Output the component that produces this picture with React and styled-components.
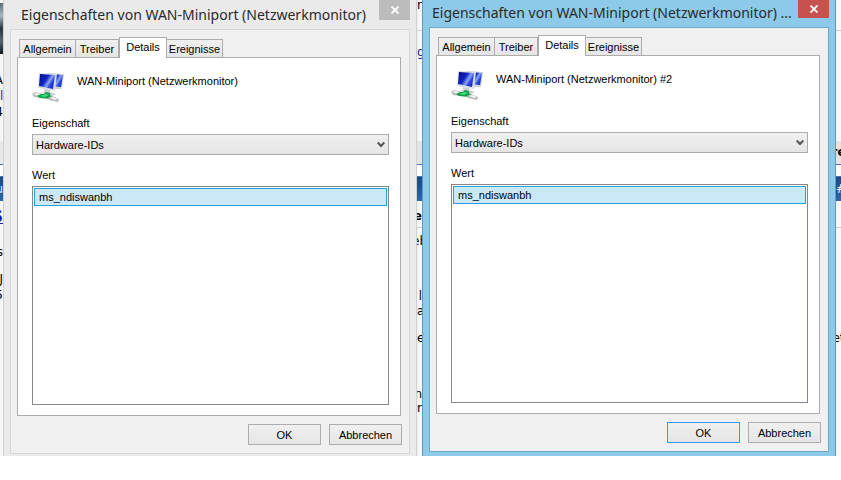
import React, { useState } from 'react'
import styled, { createGlobalStyle } from 'styled-components';

const GlobalStyle = createGlobalStyle`
  * {
    box-sizing: border-box;
  }

  body {
    margin: 0;
    background: #ffffff;
    color: #000000;
    font-family: "Liberation Sans", Arial, sans-serif;
    font-size: 12px;
  }
`;

const Desktop = styled.main`
  display: flex;
  overflow: hidden;
`;

/* page that shows between the windows */
const Strip = styled.div`
  flex: 0 0 ${(props) => props.$width}px;
  width: ${(props) => props.$width}px;
  overflow: hidden;
  background: linear-gradient(to right, #f2f2f2, #fbfbfb);
`;

const Slice = styled.div`
  display: flex;
  justify-content: ${(props) => props.$align || 'flex-start'};
  height: ${(props) => props.$height}px;
  line-height: ${(props) => props.$height}px;
  overflow: hidden;
  white-space: nowrap;
  background: ${(props) => props.$bg || 'transparent'};
  color: ${(props) => props.$color || '#000000'};
  font-family: "DejaVu Sans", sans-serif;
  font-size: ${(props) => (props.$big ? 16 : 12)}px;
  font-weight: ${(props) => (props.$bold ? 'bold' : 'normal')};
  text-decoration: ${(props) => (props.$underline ? 'underline' : 'none')};
`;

const Window = styled.section`
  flex: 1 1 0;
  min-width: 0;
  padding: 0 6px 2px;
  border: solid ${(props) => (props.$active ? '#6099b9' : '#cfcfcf')};
  border-width: 0 1px;
  background: ${(props) => (props.$active ? '#8dc9e8' : '#eaeaea')};
`;

const TitleBar = styled.header`
  display: flex;
  justify-content: space-between;
  align-items: flex-start;
  height: ${(props) => (props.$active ? 27 : 29)}px;
  padding-left: ${(props) => (props.$active ? 3 : 11)}px;
`;

const Title = styled.h1`
  margin: 0;
  overflow: hidden;
  white-space: nowrap;
  color: #2b2b2b;
  font-family: "Noto Sans", "Open Sans", sans-serif;
  font-size: 14px;
  font-weight: normal;
  line-height: ${(props) => (props.$active ? 26 : 30)}px;
`;

const CloseButton = styled.button`
  display: flex;
  flex: 0 0 31px;
  align-items: center;
  justify-content: center;
  height: ${(props) => (props.$active ? 18 : 20)}px;
  padding: 0;
  border: none;
  background: ${(props) => (props.$active ? '#c75050' : '#bcbcbc')};
`;

const Client = styled.div`
  padding: 7px 7px 8px 6px;
  border: 1px solid ${(props) => (props.$active ? '#70aac8' : '#d9d9d9')};
  background: #f0f0f0;
`;

const TabList = styled.div`
  display: flex;
  align-items: flex-end;
  padding-left: 2px;
`;

const Tab = styled.button`
  position: relative;
  height: ${(props) => (props.$selected ? 21 : 18)}px;
  width: ${(props) => props.$width}px;
  margin-bottom: ${(props) => (props.$selected ? -1 : 0)}px;
  padding: 0 0 ${(props) => (props.$selected ? 2 : 0)}px;
  border: 1px solid #acacac;
  border-bottom: none;
  border-left-width: ${(props) => (props.$joined ? 0 : 1)}px;
  background: ${(props) => (props.$selected ? '#ffffff' : 'linear-gradient(#f0f0f0, #e5e5e5)')};
  color: #000000;
  font-family: inherit;
  font-size: 11px;
  line-height: 16px;
  white-space: nowrap;
`;

const Panel = styled.div`
  margin-right: 1px;
  padding: 13px 11px 10px 14px;
  border: 1px solid #acacac;
  background: #ffffff;
`;

const DeviceRow = styled.div`
  display: flex;
  gap: 13px;
  height: 32px;
  margin-bottom: 12px;
`;

const DeviceName = styled.span`
  font-size: 11px;
  line-height: 20px;
`;

const Label = styled.label`
  display: block;
  margin-bottom: 3px;
  font-size: 11px;
  line-height: 16px;
`;

const SelectBox = styled.div`
  position: relative;
  margin-bottom: 12px;

  svg {
    position: absolute;
    top: 7px;
    right: 4px;
    pointer-events: none;
  }
`;

const Select = styled.select`
  display: block;
  width: 100%;
  height: 21px;
  padding: 0 3px;
  appearance: none;
  border: 1px solid #acacac;
  border-radius: 0;
  background: linear-gradient(#f0f0f0, #e5e5e5);
  color: #000000;
  font-family: inherit;
  font-size: 11px;
`;

const ValueList = styled.ul`
  height: 219px;
  margin: 0;
  padding: 1px;
  border: 1px solid #828790;
  list-style: none;
`;

const ValueItem = styled.li`
  height: 18px;
  padding: 0 4px;
  border: 1px solid #26a0da;
  background: #cbe8f6;
  font-size: 11px;
  line-height: 17px;
`;

const ButtonRow = styled.div`
  display: flex;
  justify-content: flex-end;
  gap: 8px;
  margin-top: 8px;
`;

const DialogButton = styled.button`
  width: 73px;
  height: 21px;
  padding: 0;
  border: 1px solid ${(props) => (props.$primary ? '#3399ff' : '#acacac')};
  background: linear-gradient(#f0f0f0, #e5e5e5);
  color: #000000;
  font-family: inherit;
  font-size: 11px;
`;

const NetworkIcon = ({ id }) => (
  <svg width="32" height="32" viewBox="0 0 32 32" aria-hidden="true">
    <defs>
      <linearGradient id={`${id}-screen`} x1="0" y1="0.2" x2="1" y2="0.8">
        <stop offset="0" stopColor="#050f8c" />
        <stop offset="0.4" stopColor="#1226c8" />
        <stop offset="0.6" stopColor="#8ea6f4" />
        <stop offset="0.75" stopColor="#2a48dc" />
        <stop offset="1" stopColor="#0f22b4" />
      </linearGradient>
    </defs>
    <path d="M16 2 L32 3 L30 18 L17 18 Z" fill="#cdd3da" />
    <path d="M18 3 L31 4 L29 16 L18 15 Z" fill={`url(#${id}-screen)`} />
    <path d="M12 18 L18 19 L18 21 L24 23 L20 25 L9 22 L12 21 Z" fill="#c9ced3" />
    <path d="M7 2 L25 3 L23 20 L6 17 Z" fill="#d8dde3" />
    <path d="M8 3 L23 4 L21 18 L7 15 Z" fill={`url(#${id}-screen)`} />
    <path d="M0 23 L3 21 L11 23 L10 27 L2 26 Z" fill="#b4bab8" />
    <path d="M1 23 L4 22 L9 23 L7 25 Z" fill="#f4f6f5" />
    <path d="M5 25 L9 23 L12 23 L14 21 L18 22 L18 24 L21 26 L18 28 L8 27 Z" fill="#12a048" />
    <path d="M8 25 L14 23 L17 24 L13 26 Z" fill="#3fdc78" />
    <path d="M16 27 L20 25 L27 28 L26 31 L17 29 Z" fill="#b4bab8" />
    <path d="M18 27 L21 26 L26 28 L23 29 Z" fill="#f1f3f2" />
  </svg>
);

const CloseIcon = () => (
  <svg width="8" height="8" viewBox="0 0 8 8" aria-hidden="true">
    <path d="M0.5 0.5 L7.5 7.5 M7.5 0.5 L0.5 7.5" stroke="#ffffff" strokeWidth="1.8" />
  </svg>
);

const ChevronIcon = () => (
  <svg width="8" height="7" viewBox="0 0 8 7" aria-hidden="true">
    <path d="M0.7 1.5 L4 5 L7.3 1.5" fill="none" stroke="#555555" strokeWidth="2" />
  </svg>
);

const BLUE = 'linear-gradient(#174a88, #2d66ac)';

const leftPage = [
  { height: 3 },
  { height: 51, bg: 'linear-gradient(#5b6d78, #a9b8c0 25%, #26343e 50%, #55656f 75%, #101820)' },
  { height: 18 },
  { height: 16, text: 'A', align: 'flex-end' },
  { height: 16, text: 'l', color: '#800080' },
  { height: 16, text: '4', align: 'flex-end' },
  { height: 21 },
  { height: 23, bg: '#e8e8e8' },
  { height: 1, bg: '#4a72b8' },
  { height: 11, bg: '#ffffff' },
  { height: 1, bg: '#4a72b8' },
  { height: 24, bg: BLUE, text: 'u', color: '#c8e8ff', align: 'flex-end' },
  { height: 6 },
  { height: 20, text: 'S', color: '#1c1c9c', align: 'flex-end', big: true, bold: true, underline: true },
  { height: 17 },
  { height: 16, text: 's', align: 'flex-end' },
  { height: 11 },
  { height: 16, text: 'J', align: 'flex-end' },
  { height: 16, text: '5', align: 'flex-end' },
  { height: 153 },
];

const middlePage = [
  { height: 10, text: 'r' },
  { height: 20 },
  { height: 1, bg: '#cccccc' },
  { height: 13 },
  { height: 16, text: 'g', color: '#1c1c9c', underline: true },
  { height: 81 },
  { height: 23, bg: '#e4e4e4' },
  { height: 1, bg: '#4a72b8' },
  { height: 11, bg: '#ffffff' },
  { height: 1, bg: '#4a72b8' },
  { height: 24, bg: BLUE },
  { height: 7 },
  { height: 16, text: 'e', bold: true, align: 'flex-end' },
  { height: 3 },
  { height: 1, bg: '#cccccc' },
  { height: 5 },
  { height: 16, text: 'eb', align: 'center' },
  { height: 39 },
  { height: 16, text: 'l', align: 'flex-end' },
  { height: 14, text: 'a' },
  { height: 12 },
  { height: 16, text: 'e' },
  { height: 41 },
  { height: 14, text: 'n', align: 'flex-end' },
  { height: 14, text: 'r' },
  { height: 41 },
];

const rightPage = [
  { height: 30 },
  { height: 1, bg: '#cccccc' },
  { height: 110 },
  { height: 23, bg: '#e4e4e4', text: 're', bold: true, align: 'center' },
  { height: 1, bg: '#4a72b8' },
  { height: 11, bg: '#ffffff' },
  { height: 1, bg: '#4a72b8' },
  { height: 24, bg: BLUE, text: '#', color: '#ffffff' },
  { height: 26 },
  { height: 1, bg: '#cccccc' },
  { height: 102 },
  { height: 16, text: 'et', align: 'center' },
  { height: 110 },
];

const tabs = [
  { name: 'Allgemein', width: 57 },
  { name: 'Treiber', width: 43, joined: true },
  { name: 'Details', width: 48 },
  { name: 'Ereignisse', width: 56, joined: true },
];

const PageStrip = ({ width, slices }) => (
  <Strip $width={width}>
    {slices.map((slice, i) => (
      <Slice
        key={i}
        $height={slice.height}
        $bg={slice.bg}
        $color={slice.color}
        $align={slice.align}
        $big={slice.big}
        $bold={slice.bold}
        $underline={slice.underline}
      >
        {slice.text}
      </Slice>
    ))}
  </Strip>
);

const PropertiesWindow = ({ id, title, device, active }) => {
  const [tab, setTab] = useState('Details')

  return (
    <Window $active={active}>
      <TitleBar $active={active}>
        <Title $active={active}>{title}</Title>
        <CloseButton $active={active} aria-label="Schließen">
          <CloseIcon />
        </CloseButton>
      </TitleBar>
      <Client $active={active}>
        <TabList role="tablist">
          {tabs.map((item) => (
            <Tab
              key={item.name}
              role="tab"
              aria-selected={tab === item.name}
              $selected={tab === item.name}
              $width={item.width}
              $joined={item.joined}
              onClick={() => setTab(item.name)}
            >
              {item.name}
            </Tab>
          ))}
        </TabList>
        <Panel role="tabpanel">
          <DeviceRow>
            <NetworkIcon id={id} />
            <DeviceName>{device}</DeviceName>
          </DeviceRow>
          <Label htmlFor={`${id}-property`}>Eigenschaft</Label>
          <SelectBox>
            <Select id={`${id}-property`}>
              <option>Hardware-IDs</option>
            </Select>
            <ChevronIcon />
          </SelectBox>
          <Label as="div" id={`${id}-value`}>Wert</Label>
          <ValueList role="listbox" aria-labelledby={`${id}-value`}>
            <ValueItem role="option" aria-selected="true">ms_ndiswanbh</ValueItem>
          </ValueList>
        </Panel>
        <ButtonRow>
          <DialogButton $primary={active}>OK</DialogButton>
          <DialogButton>Abbrechen</DialogButton>
        </ButtonRow>
      </Client>
    </Window>
  )
}

const App = () => {
  return (
    <>
      <GlobalStyle />
      <Desktop>
        <PageStrip width={3} slices={leftPage} />
        <PropertiesWindow
          id="wan1"
          title="Eigenschaften von WAN-Miniport (Netzwerkmonitor)"
          device="WAN-Miniport (Netzwerkmonitor)"
        />
        <PageStrip width={5} slices={middlePage} />
        <PropertiesWindow
          id="wan2"
          title="Eigenschaften von WAN-Miniport (Netzwerkmonitor) ..."
          device="WAN-Miniport (Netzwerkmonitor) #2"
          active
        />
        <PageStrip width={5} slices={rightPage} />
      </Desktop>
    </>
  )
}

export default App
